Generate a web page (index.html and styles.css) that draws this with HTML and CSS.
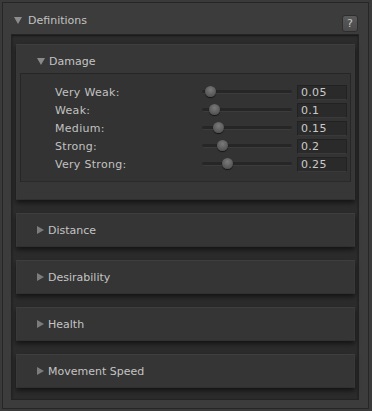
FILE: index.html
```html
<!DOCTYPE html>
<html>
<head>
    <link rel="stylesheet" href="styles.css">
</head>

<body>

    <div class="inspector">
        <div class="title-bar">
            <span class="arrow down"></span>
            <span class="title">Definitions</span>
            <button class="help">?</button>
        </div>

        <div class="content">

            <div class="card open">
                <div class="card-head"><span class="arrow down"></span>Damage</div>
                <div class="values">
                    <div class="row">
                        <span class="label">Very Weak:</span>
                        <div class="slider"><span class="thumb" style="left: 3px"></span></div>
                        <div class="field">0.05</div>
                    </div>
                    <div class="row">
                        <span class="label">Weak:</span>
                        <div class="slider"><span class="thumb" style="left: 7px"></span></div>
                        <div class="field">0.1</div>
                    </div>
                    <div class="row">
                        <span class="label">Medium:</span>
                        <div class="slider"><span class="thumb" style="left: 11px"></span></div>
                        <div class="field">0.15</div>
                    </div>
                    <div class="row">
                        <span class="label">Strong:</span>
                        <div class="slider"><span class="thumb" style="left: 15px"></span></div>
                        <div class="field">0.2</div>
                    </div>
                    <div class="row">
                        <span class="label">Very Strong:</span>
                        <div class="slider"><span class="thumb" style="left: 20px"></span></div>
                        <div class="field">0.25</div>
                    </div>
                </div>
            </div>

            <div class="card"><div class="card-head"><span class="arrow right"></span>Distance</div></div>
            <div class="card"><div class="card-head"><span class="arrow right"></span>Desirability</div></div>
            <div class="card"><div class="card-head"><span class="arrow right"></span>Health</div></div>
            <div class="card"><div class="card-head"><span class="arrow right"></span>Movement Speed</div></div>

        </div>
    </div>

</body>

</html>
```

FILE: styles.css
```css
html,
body {
    margin: 0;
    padding: 0;
    width: 372px;
    height: 411px;
    background-color: #3a3a3a;
    font-family: "DejaVu Sans", Verdana, sans-serif;
    font-size: 11px;
    color: #c2c2c2;
    overflow: hidden;
}

.inspector {
    box-sizing: border-box;
    margin: 2px 0 0 2px;
    width: 367px;
    height: 407px;
    border: 1px solid #262626;
    background-color: #3c3c3c;
}

.title-bar {
    height: 27px;
    padding-top: 4px;
    display: flex;
    align-items: center;
    padding-left: 11px;
    padding-right: 10px;
}

.title {
    margin-left: 6px;
    flex: 1;
}

.arrow {
    display: inline-block;
    width: 0;
    height: 0;
}

.arrow.down {
    border-left: 4px solid transparent;
    border-right: 4px solid transparent;
    border-top: 7px solid #8c8c8c;
}

.arrow.right {
    border-top: 4px solid transparent;
    border-bottom: 4px solid transparent;
    border-left: 7px solid #7c7c7c;
    margin-right: 4px;
}

.help {
    box-sizing: border-box;
    width: 16px;
    height: 17px;
    padding: 0;
    border: 1px solid #2e2e2e;
    border-radius: 3px;
    background: linear-gradient(#5a5a5a, #4a4a4a);
    color: #c8c8c8;
    font-family: "DejaVu Sans", sans-serif;
    font-size: 11px;
    line-height: 14px;
    margin-top: 6px;
}

.content {
    box-sizing: border-box;
    margin-left: 8px;
    width: 348px;
    height: 366px;
    border: 1px solid #232323;
    background-color: #2c2c2c;
    box-shadow: inset 0 1px 2px rgba(0, 0, 0, 0.5);
    padding: 9px 3px 0 4px;
    display: flex;
    flex-direction: column;
    gap: 13px;
}

.card {
    box-sizing: border-box;
    height: 34px;
    background-color: #353535;
    border-top: 1px solid #3e3e3e;
    border-left: 1px solid #393939;
    border-right: 1px solid #393939;
    border-bottom: 1px solid #303030;
    box-shadow: 0 3px 5px rgba(0, 0, 0, 0.55);
}

.card.open {
    height: 156px;
    background-color: #373737;
}

.card-head {
    height: 32px;
    display: flex;
    align-items: center;
    padding-left: 20px;
    color: #c4c4c4;
}

.card.open .card-head {
    box-sizing: border-box;
    height: 28px;
    padding-top: 4px;
}

.card-head .arrow.down {
    margin-right: 4px;
    border-top-color: #8a8a8a;
}

.values {
    box-sizing: border-box;
    margin: 0 3px 0 3px;
    height: 109px;
    background-color: #333333;
    border: 1px solid #262626;
    border-bottom-color: #2a2a2a;
    padding: 9px 3px 0 34px;
}

.row {
    height: 18px;
    display: flex;
    align-items: center;
}

.label {
    flex: 1;
    letter-spacing: 0.3px;
}

.slider {
    position: relative;
    width: 90px;
    height: 3px;
    border-radius: 2px;
    background-color: #262626;
    border-bottom: 1px solid #3c3c3c;
    margin-right: 5px;
}

.thumb {
    position: absolute;
    top: -4px;
    width: 11px;
    height: 11px;
    border-radius: 50%;
    background: radial-gradient(circle at 50% 35%, #7a7a7a, #555555 70%, #404040);
    box-shadow: 0 1px 1px rgba(0, 0, 0, 0.6);
}

.field {
    box-sizing: border-box;
    width: 50px;
    height: 15px;
    line-height: 13px;
    background-color: #2a2a2a;
    border: 1px solid #222222;
    border-bottom-color: #3a3a3a;
    padding-left: 3px;
    color: #cacaca;
    letter-spacing: 0.3px;
}
```
